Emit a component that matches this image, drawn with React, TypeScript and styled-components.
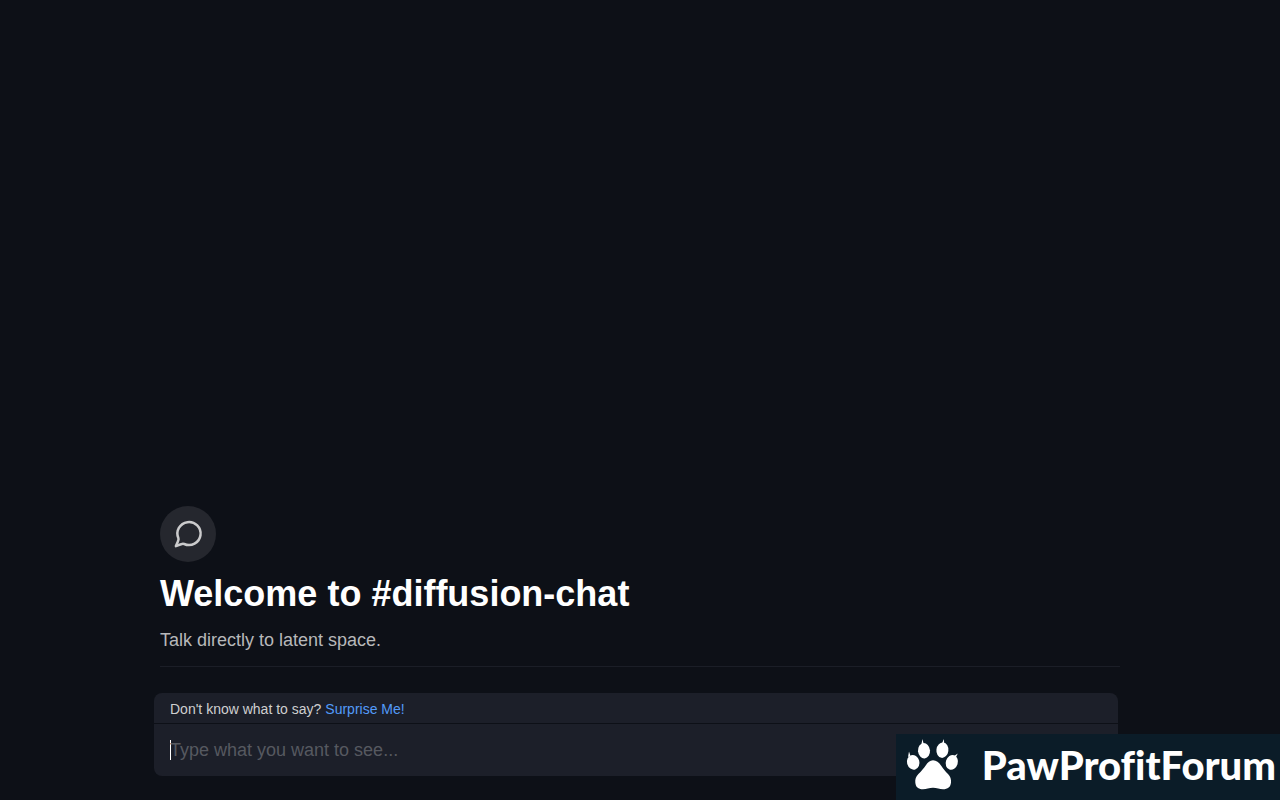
import React from "react";
import styled, { createGlobalStyle } from "styled-components";

const GlobalStyle = createGlobalStyle`
  *, *::before, *::after { box-sizing: border-box; }
  body {
    margin: 0;
    background: #0d1017;
    color: #ffffff;
    font-family: "Liberation Sans", Arial, sans-serif;
  }
`;

const Page = styled.main`
  min-height: 100vh;
  display: flex;
  flex-direction: column;
  justify-content: flex-end;
  align-items: center;
  gap: 26px;
  padding: 24px;
`;

const Intro = styled.section`
  width: 100%;
  max-width: 960px;
  padding-bottom: 12px;
  border-bottom: 1px solid #1b1e27;
`;

const Badge = styled.div`
  width: 56px;
  height: 56px;
  border-radius: 50%;
  background: #25272e;
  display: flex;
  align-items: center;
  justify-content: center;
`;

const Title = styled.h1`
  margin: 12px 0;
  font-size: 36px;
  line-height: 40px;
  font-weight: 700;
`;

const Subtitle = styled.p`
  margin: 0;
  font-size: 18px;
  line-height: 28px;
  color: #b7b8ba;
`;

const Composer = styled.form`
  width: calc(100% + 4px);
  max-width: 964px;
  margin-right: 8px;
  border-radius: 8px;
  background: #1c1f29;
  overflow: hidden;
`;

const Hint = styled.div`
  display: flex;
  align-items: center;
  gap: 4px;
  padding: 6px 16px 4px;
  border-bottom: 1px solid #0d1017;
  font-size: 14px;
  line-height: 20px;
  color: #cfcfd0;
`;

const SurpriseButton = styled.button`
  padding: 0;
  border: 0;
  background: none;
  font: inherit;
  color: #539bf9;
  cursor: pointer;
`;

const PromptRow = styled.div`
  display: flex;
  align-items: center;
  height: 52px;
  padding: 0 16px;
`;

const Caret = styled.span`
  width: 1px;
  height: 20px;
  margin-right: -1px;
  background: #ffffff;
`;

const PromptInput = styled.input`
  flex: 1;
  min-width: 0;
  height: 28px;
  padding: 0;
  border: 0;
  outline: 0;
  background: transparent;
  color: #ffffff;
  font: inherit;
  font-size: 18px;

  &::placeholder {
    color: #565960;
    opacity: 1;
  }
`;

const Brand = styled.aside`
  position: fixed;
  right: 0;
  bottom: 0;
  width: 384px;
  height: 66px;
  padding: 0 4px 0 8px;
  display: flex;
  align-items: center;
  justify-content: space-between;
  background: #0b1c28;
`;

const BrandName = styled.span`
  padding-bottom: 4px;
  font-family: Lato, sans-serif;
  font-size: 40px;
  line-height: 48px;
  font-weight: 900;
  font-variant-ligatures: none;
  white-space: nowrap;
`;

function ChatIcon() {
  return (
    <svg width="32" height="32" viewBox="0 0 32 32" fill="none" stroke="#cbcbcc" strokeWidth="2.5" strokeLinejoin="round" aria-hidden="true">
      <path d="M6.4 20.2A11.6 11.5 0 1 1 12.2 26C11 25.6 10.2 25.7 9 26.3L3.9 28.1L5.9 23.4C6.6 22 6.7 21.2 6.4 20.2Z" />
    </svg>
  );
}

function PawIcon() {
  return (
    <svg width="56" height="56" viewBox="0 0 56 56" fill="#ffffff" aria-hidden="true">
      <ellipse cx="9.2" cy="23.3" rx="6.2" ry="7.4" transform="rotate(-16 9.2 23.3)" />
      <ellipse cx="20" cy="11.8" rx="6" ry="7.7" transform="rotate(-5 20 11.8)" />
      <ellipse cx="38.4" cy="11.2" rx="6" ry="7.7" transform="rotate(7 38.4 11.2)" />
      <ellipse cx="47.8" cy="23.4" rx="6" ry="7.5" transform="rotate(18 47.8 23.4)" />
      <path d="M4 18L5 12.5L6.5 17ZM17.3 6L18.4 0L20 6ZM37.8 5L39.8 0L40.3 5ZM49.7 17.2L53.8 14.4L51.6 18.8Z" />
      <path d="M29 21.3C32.5 21.3 34.8 23.4 37 26.5C39.6 30.2 41 32 44 35C46.5 37.6 47.3 40.3 47 43.5C46.6 48 43.8 50.3 39 50.3C35.5 50.3 33 48.7 29 48.7C25 48.7 22.5 50.3 19 50.3C14.2 50.3 11.7 48 11.3 43.5C11 40.3 11.9 37.6 14.4 35C17.4 32 19.5 29.5 21.7 26.4C23.8 23.4 25.9 21.3 29 21.3Z" />
    </svg>
  );
}

export default function App() {
  return (
    <>
      <GlobalStyle />
      <Page>
        <Intro>
          <Badge><ChatIcon /></Badge>
          <Title>Welcome to #diffusion-chat</Title>
          <Subtitle>Talk directly to latent space.</Subtitle>
        </Intro>
        <Composer onSubmit={(event) => event.preventDefault()}>
          <Hint>
            <span>Don't know what to say?</span>
            <SurpriseButton type="button">Surprise Me!</SurpriseButton>
          </Hint>
          <PromptRow>
            <Caret aria-hidden="true" />
            <PromptInput type="text" aria-label="Prompt" placeholder="Type what you want to see..." />
          </PromptRow>
        </Composer>
      </Page>
      <Brand>
        <PawIcon />
        <BrandName>PawProfitForum</BrandName>
      </Brand>
    </>
  );
}
